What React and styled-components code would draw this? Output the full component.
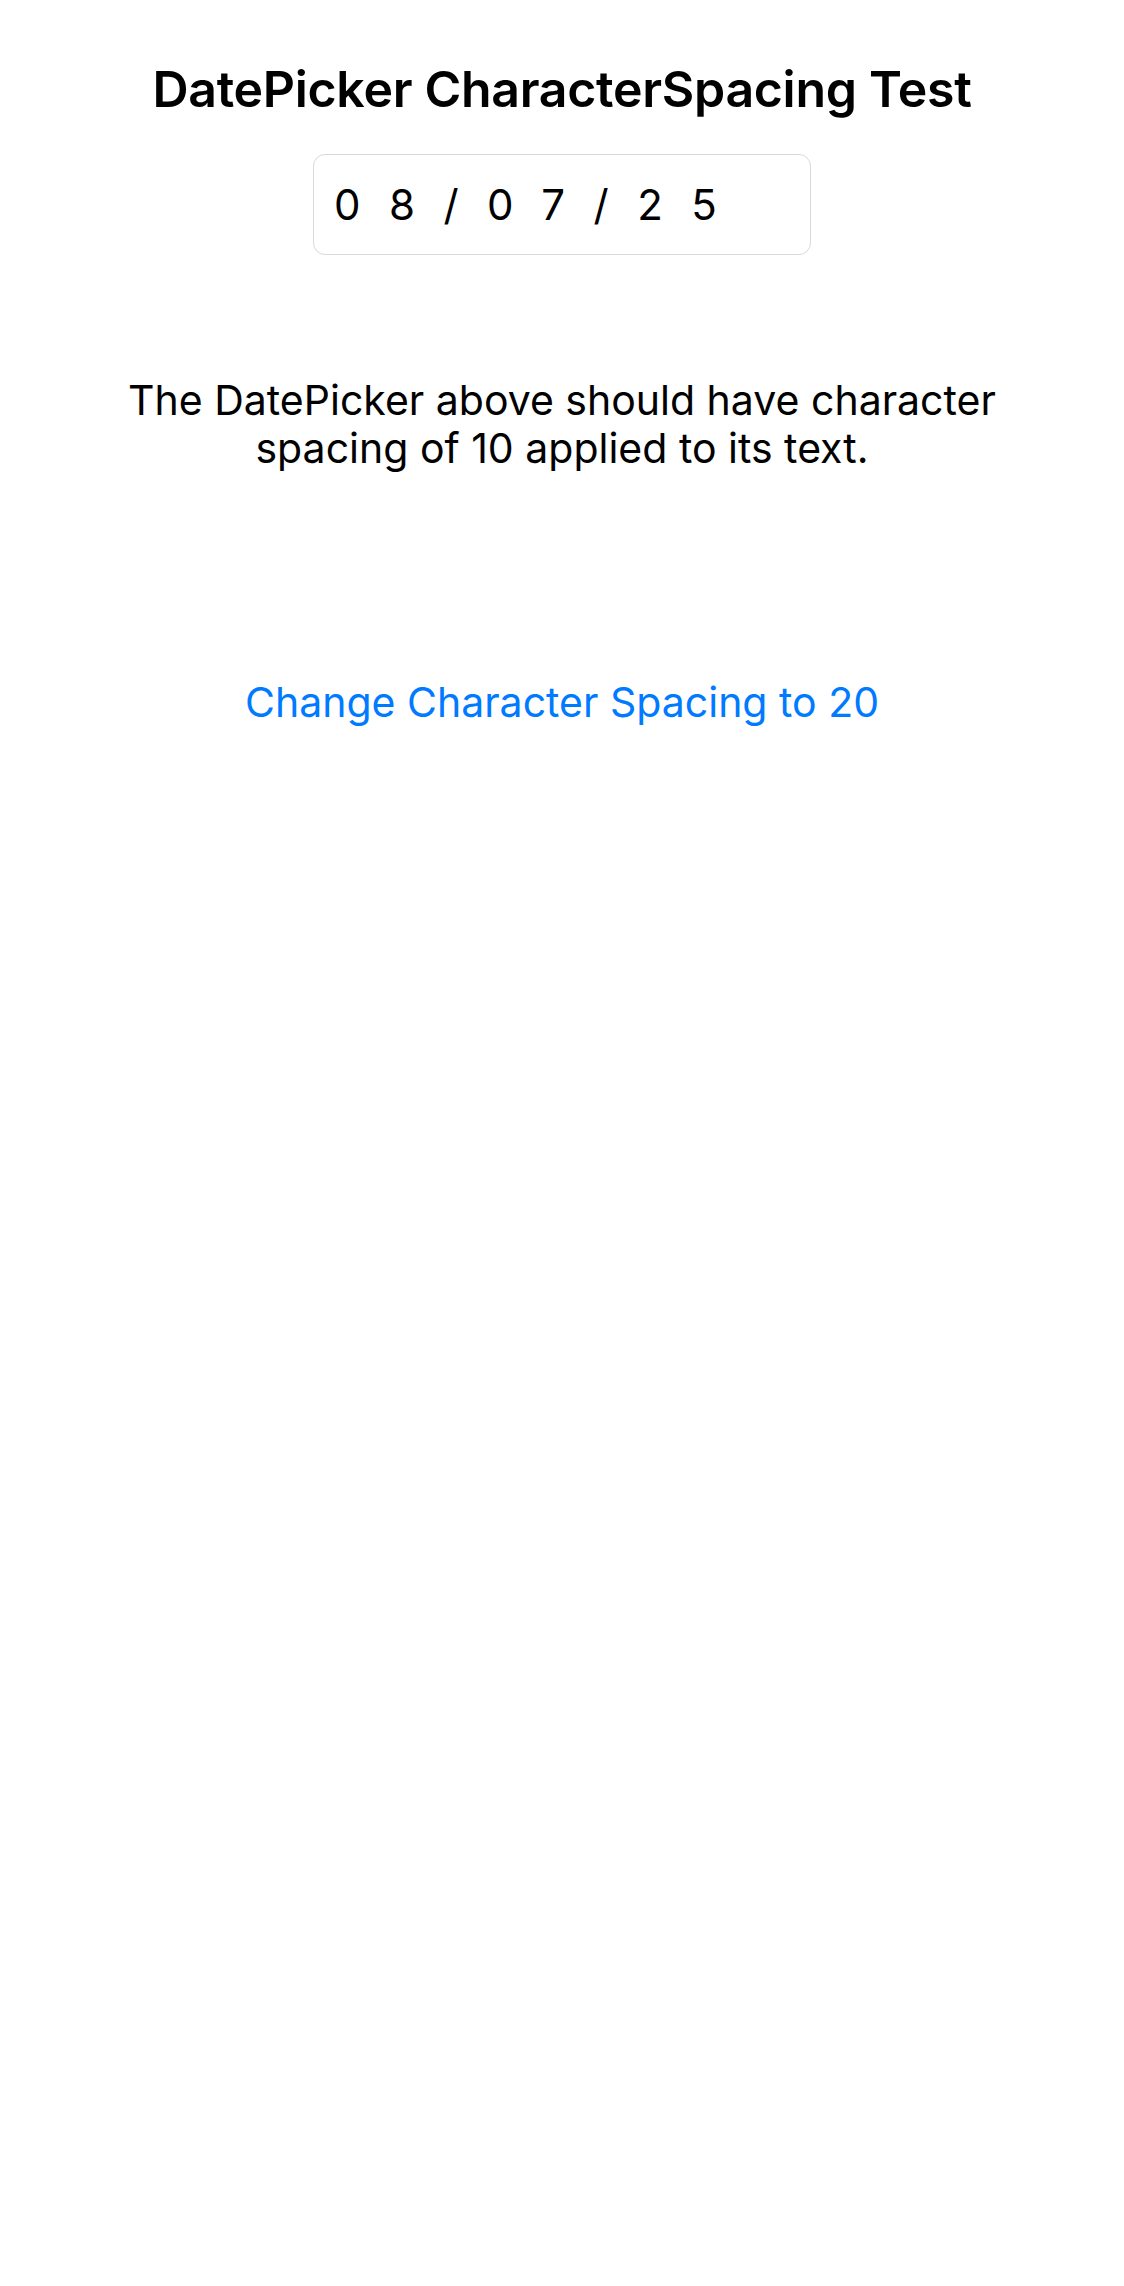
import React, { useState } from "react"
import styled, { createGlobalStyle } from "styled-components"

const Global = createGlobalStyle`
  html, body {
    margin: 0;
    padding: 0;
    background: #ffffff;
  }
  body {
    font-family: Inter, "Noto Sans", "Liberation Sans", sans-serif;
    color: #000;
  }
`;

const Page = styled.main`
  display: flex;
  flex-direction: column;
  align-items: center;
  padding: 59px 50px 0;
  min-height: 2286px;
  box-sizing: border-box;
`;

const Title = styled.h1`
  margin: 0;
  font-size: 50px;
  line-height: 60px;
  font-weight: 600;
  letter-spacing: -0.3px;
`;

const DateField = styled.div`
  display: flex;
  align-items: center;
  box-sizing: border-box;
  width: 498px;
  height: 101px;
  margin-top: 35px;
  padding: 0 20px;
  border: 1.5px solid #d9d9d9;
  border-radius: 12px;
  font-size: 42px;
  letter-spacing: ${({ spacing }) => spacing * 2.85}px;
`;

const Description = styled.p`
  margin: 121px 0 0;
  max-width: 1010px;
  font-size: 41px;
  line-height: 48px;
  text-align: center;
`;

const LinkButton = styled.button`
  margin-top: 206px;
  padding: 0;
  border: none;
  background: none;
  font-family: inherit;
  font-size: 41px;
  line-height: 48px;
  color: #007aff;
  cursor: pointer;
`;

export default function App() {
  const [spacing, setSpacing] = useState(10)
  return (
    <>
      <Global />
      <Page>
        <Title>DatePicker CharacterSpacing Test</Title>
        <DateField spacing={spacing}>08/07/25</DateField>
        <Description>
          {`The DatePicker above should have character spacing of ${spacing} applied to its text.`}
        </Description>
        <LinkButton onClick={() => setSpacing(20)}>Change Character Spacing to 20</LinkButton>
      </Page>
    </>
  )
}
